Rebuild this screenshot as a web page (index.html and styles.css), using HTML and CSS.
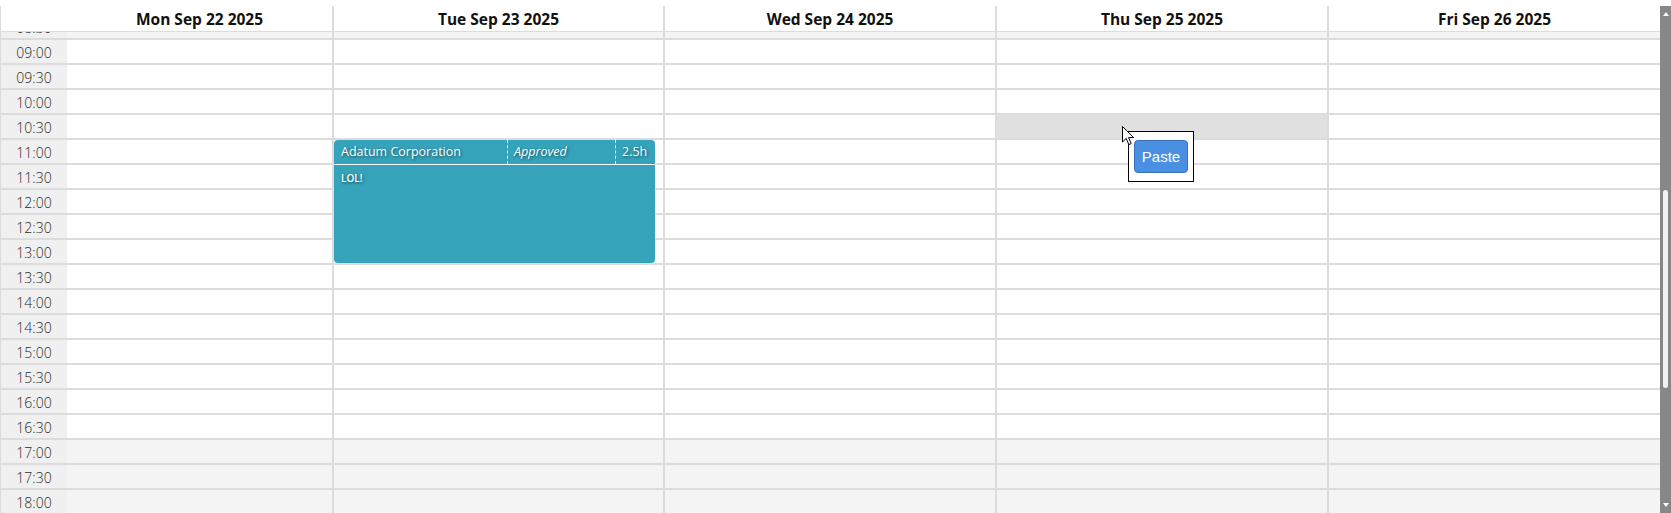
FILE: index.html
```html
<!DOCTYPE html>
<html lang="en">
<head>
<meta charset="utf-8">
<title>Week calendar</title>
<link rel="stylesheet" href="styles.css">
</head>
<body>
<div class="calendar">
  <div class="grid-area">
    <div class="head">
      <div class="hc time"></div>
      <div class="hc">Mon Sep 22 2025</div>
      <div class="hc">Tue Sep 23 2025</div>
      <div class="hc">Wed Sep 24 2025</div>
      <div class="hc">Thu Sep 25 2025</div>
      <div class="hc">Fri Sep 26 2025</div>
    </div>
    <div class="body">
      <div class="rows">
        <div class="row off"><div class="t">08:30</div><div class="c"></div><div class="c"></div><div class="c"></div><div class="c"></div><div class="c"></div></div>
        <div class="row"><div class="t">09:00</div><div class="c"></div><div class="c"></div><div class="c"></div><div class="c"></div><div class="c"></div></div>
        <div class="row"><div class="t">09:30</div><div class="c"></div><div class="c"></div><div class="c"></div><div class="c"></div><div class="c"></div></div>
        <div class="row"><div class="t">10:00</div><div class="c"></div><div class="c"></div><div class="c"></div><div class="c"></div><div class="c"></div></div>
        <div class="row"><div class="t">10:30</div><div class="c"></div><div class="c"></div><div class="c"></div><div class="c sel"></div><div class="c"></div></div>
        <div class="row"><div class="t">11:00</div><div class="c"></div><div class="c has-event">
          <div class="event">
            <div class="ev-head">
              <span class="ev-client">Adatum Corporation</span>
              <span class="ev-status">Approved</span>
              <span class="ev-hours">2.5h</span>
            </div>
            <div class="ev-body">LOL!</div>
          </div>
        </div><div class="c"></div><div class="c"></div><div class="c"></div></div>
        <div class="row"><div class="t">11:30</div><div class="c"></div><div class="c"></div><div class="c"></div><div class="c"></div><div class="c"></div></div>
        <div class="row"><div class="t">12:00</div><div class="c"></div><div class="c"></div><div class="c"></div><div class="c"></div><div class="c"></div></div>
        <div class="row"><div class="t">12:30</div><div class="c"></div><div class="c"></div><div class="c"></div><div class="c"></div><div class="c"></div></div>
        <div class="row"><div class="t">13:00</div><div class="c"></div><div class="c"></div><div class="c"></div><div class="c"></div><div class="c"></div></div>
        <div class="row"><div class="t">13:30</div><div class="c"></div><div class="c"></div><div class="c"></div><div class="c"></div><div class="c"></div></div>
        <div class="row"><div class="t">14:00</div><div class="c"></div><div class="c"></div><div class="c"></div><div class="c"></div><div class="c"></div></div>
        <div class="row"><div class="t">14:30</div><div class="c"></div><div class="c"></div><div class="c"></div><div class="c"></div><div class="c"></div></div>
        <div class="row"><div class="t">15:00</div><div class="c"></div><div class="c"></div><div class="c"></div><div class="c"></div><div class="c"></div></div>
        <div class="row"><div class="t">15:30</div><div class="c"></div><div class="c"></div><div class="c"></div><div class="c"></div><div class="c"></div></div>
        <div class="row"><div class="t">16:00</div><div class="c"></div><div class="c"></div><div class="c"></div><div class="c"></div><div class="c"></div></div>
        <div class="row"><div class="t">16:30</div><div class="c"></div><div class="c"></div><div class="c"></div><div class="c"></div><div class="c"></div></div>
        <div class="row off"><div class="t">17:00</div><div class="c"></div><div class="c"></div><div class="c"></div><div class="c"></div><div class="c"></div></div>
        <div class="row off"><div class="t">17:30</div><div class="c"></div><div class="c"></div><div class="c"></div><div class="c"></div><div class="c"></div></div>
        <div class="row off"><div class="t">18:00</div><div class="c"></div><div class="c"></div><div class="c"></div><div class="c"></div><div class="c"></div></div>
      </div>
    </div>
  </div>
  <div class="scrollbar">
    <div class="sb-btn"><span class="arrow-up"></span></div>
    <div class="sb-track"><div class="sb-thumb"></div></div>
    <div class="sb-btn"><span class="arrow-down"></span></div>
  </div>

  <div class="paste-menu"><button class="paste-btn" type="button">Paste</button></div>
  <svg class="cursor" width="13" height="20" viewBox="0 0 13 20" aria-hidden="true">
    <path d="M0.5 0.5 L0.5 16 L4.2 12.4 L6.8 18.6 L9.2 17.6 L6.6 11.6 L11.6 11.6 Z" fill="#fff" stroke="#000" stroke-width="1" stroke-linejoin="miter"/>
  </svg>
</div>
</body>
</html>
```

FILE: styles.css
```css
* { box-sizing: border-box; }

html, body {
  margin: 0;
  padding: 0;
  background: #fff;
}

body {
  font-family: "Open Sans", "Noto Sans", "Liberation Sans", sans-serif;
  color: #111;
  overflow: hidden;
}

.calendar {
  position: relative;
  display: flex;
  height: 513px;
  width: 1671px;
  padding-top: 6px;
  overflow: hidden;
}

.grid-area {
  flex: 1;
  display: flex;
  flex-direction: column;
  border-left: 1px solid #dcdcdc;
  min-width: 0;
}

.head,
.row {
  display: grid;
  grid-template-columns: 66px 267px 331px 332px 332px 331px;
}

.head {
  height: 26px;
  border-bottom: 1px solid #dcdcdc;
  flex: none;
}

.hc {
  height: 25px;
  display: flex;
  align-items: center;
  justify-content: center;
  font-weight: 700;
  font-size: 15.5px;
  color: #111;
  border-right: 2px solid #dcdcdc;
}

.hc.time { border-right: 0; }
.hc:last-child { border-right: 0; }

.body {
  flex: 1;
  overflow: hidden;
}

.rows {
  margin-top: -17px;
}

.row {
  height: 25px;
}

.t,
.c {
  height: 25px;
  border-bottom: 2px solid #dcdcdc;
}

.t {
  background: #f0f0f0;
  font-size: 14px;
  font-weight: 300;
  color: #2a2a2a;
  text-align: center;
  line-height: 23px;
  padding-top: 1px;
}

.c {
  background: #fff;
  border-right: 2px solid #dcdcdc;
}

.c:last-child { border-right: 0; }

.row.off .c { background: #f4f4f4; }

.c.sel { background: #e0e0e0; }

.c.has-event { position: relative; }

.event {
  position: absolute;
  top: 0;
  left: 0;
  right: 8px;
  height: 123px;
  z-index: 2;
  background: #35a3ba;
  border-radius: 4px;
  color: #fff;
  text-shadow: 1px 1px 3px rgba(0, 0, 0, 0.55);
  display: flex;
  flex-direction: column;
  overflow: hidden;
}

.ev-head {
  display: flex;
  height: 25px;
  border-bottom: 1px solid #fff;
  font-size: 12.5px;
  line-height: 24px;
}

.ev-client {
  flex: 1;
  padding-left: 7px;
  white-space: nowrap;
}

.ev-status {
  width: 108px;
  padding-left: 6px;
  font-style: italic;
  border-left: 1px dashed #fff;
}

.ev-hours {
  width: 40px;
  padding-left: 6px;
  border-left: 1px dashed #fff;
}

.ev-body {
  padding: 6px 7px;
  font-size: 10px;
  font-weight: 600;
}

.scrollbar {
  width: 11px;
  flex: none;
  background: #878787;
  display: flex;
  flex-direction: column;
}

.sb-btn {
  height: 14px;
  display: flex;
  align-items: center;
  justify-content: center;
  flex: none;
}

.arrow-up {
  width: 0;
  height: 0;
  border-left: 3px solid transparent;
  border-right: 3px solid transparent;
  border-bottom: 4px solid #fff;
  margin-top: 1px;
}

.arrow-down {
  width: 0;
  height: 0;
  border-left: 3px solid transparent;
  border-right: 3px solid transparent;
  border-top: 4px solid #fff;
  margin-bottom: 2px;
}

.sb-track {
  flex: 1;
}

.sb-thumb {
  margin-top: 170px;
  margin-left: 3px;
  width: 5px;
  height: 198px;
  border-radius: 3px;
  background: #f1f1f1;
}

.paste-menu {
  position: absolute;
  left: 1128px;
  top: 131px;
  width: 66px;
  height: 51px;
  background: #fff;
  border: 1px solid #000;
  z-index: 5;
  padding: 8px 0 0 5px;
}

.paste-btn {
  width: 54px;
  height: 33px;
  background: #4a90e2;
  border: 1px solid #3572b8;
  border-radius: 4px;
  color: #fff;
  font-family: "Liberation Sans", Arial, sans-serif;
  font-size: 15px;
  padding: 0;
  cursor: pointer;
}

.cursor {
  position: absolute;
  left: 1122px;
  top: 126px;
  z-index: 6;
}
```
